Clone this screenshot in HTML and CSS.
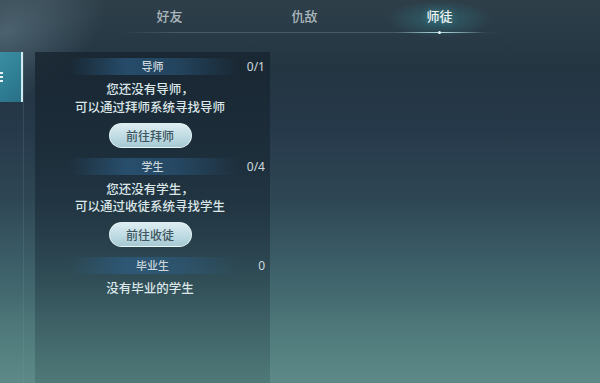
FILE: index.html
```html
<!DOCTYPE html>
<html lang="zh-CN">
<head>
<meta charset="utf-8">
<title>师徒</title>
<link rel="stylesheet" href="styles.css">
</head>
<body>
<div class="screen">
  <div class="beam"></div>
  <div class="fog"></div>
  <nav class="tabs">
    <div class="tab">好友</div>
    <div class="tab">仇敌</div>
    <div class="tab active">师徒</div>
  </nav>
  <div class="tabline"><div class="tabline-hl"><span class="dot"></span></div></div>
  <div class="main">
    <div class="side">
      <div class="side-tab">
        <span class="bars"><i></i><i></i><i></i></span>
      </div>
    </div>
    <section class="panel">
      <div class="head"><span></span><span class="title">导师</span><span class="count">0/1</span></div>
      <p class="msg">您还没有导师，<br>可以通过拜师系统寻找导师</p>
      <button class="btn">前往拜师</button>

      <div class="head gap"><span></span><span class="title">学生</span><span class="count">0/4</span></div>
      <p class="msg">您还没有学生，<br>可以通过收徒系统寻找学生</p>
      <button class="btn">前往收徒</button>

      <div class="head gap"><span></span><span class="title">毕业生</span><span class="count">0</span></div>
      <p class="msg">没有毕业的学生</p>
    </section>
  </div>
</div>
</body>
</html>
```
FILE: styles.css
```css
* { box-sizing: border-box; }
html, body { margin: 0; padding: 0; }
body {
  width: 600px;
  height: 383px;
  overflow: hidden;
  font-family: "Noto Sans CJK SC", "Noto Sans", sans-serif;
}
.screen {
  position: relative;
  width: 600px;
  height: 383px;
  overflow: hidden;
  background: linear-gradient(180deg, #2e3f49 0px, #293b47 30px, #243542 70px, #26394a 130px, #2f4755 200px, #3b5d67 260px, #4a7376 320px, #598583 383px);
}
.beam {
  position: absolute;
  left: -40px;
  top: -30px;
  width: 160px;
  height: 120px;
  background: radial-gradient(ellipse at 30% 40%, rgba(140,170,185,0.35), rgba(140,170,185,0) 65%);
  transform: rotate(-25deg);
  pointer-events: none;
}
.fog {
  position: absolute;
  left: 0;
  right: 0;
  bottom: 0;
  height: 90px;
  background: linear-gradient(180deg, rgba(110,160,155,0) 0, rgba(110,160,155,0.18) 100%);
  pointer-events: none;
}
.tabs {
  position: relative;
  z-index: 0;
  display: flex;
  padding-left: 102px;
  height: 32px;
  align-items: center;
}
.tab {
  position: relative;
  width: 135px;
  text-align: center;
  font-size: 13px;
  font-weight: 500;
  color: #aab6bb;
  line-height: 16px;
}
.tab.active {
  color: #eef4f5;
  text-shadow: 0 0 8px rgba(80,200,210,0.5);
}
.tab.active::before {
  content: "";
  position: absolute;
  left: 15px;
  right: 15px;
  top: -12px;
  bottom: -14px;
  background: radial-gradient(ellipse closest-side at 50% 55%, rgba(55,140,150,0.45), rgba(55,140,150,0) 100%);
  z-index: -1;
}
.tabline {
  position: relative;
  margin-left: 120px;
  width: 380px;
  height: 1px;
  background: linear-gradient(90deg, rgba(120,150,160,0) 0, rgba(120,150,160,0.35) 15%, rgba(120,150,160,0.35) 85%, rgba(120,150,160,0) 100%);
}
.tabline-hl {
  position: absolute;
  left: 275px;
  top: 0;
  width: 90px;
  height: 1px;
  background: linear-gradient(90deg, rgba(190,235,240,0) 0, rgba(190,235,240,0.9) 50%, rgba(190,235,240,0) 100%);
}
.dot {
  position: absolute;
  left: 43px;
  top: -1px;
  width: 3px;
  height: 3px;
  border-radius: 50%;
  background: #e8f6f8;
}
.main {
  position: relative;
  display: flex;
  gap: 11px;
  margin-top: 19px;
  height: 331px;
}
.side {
  width: 24px;
  flex: none;
  border-right: 1px solid rgba(120,160,170,0.18);
}
.side-tab {
  position: relative;
  height: 50px;
  background: linear-gradient(135deg, #3a8da2 0%, #2e7d93 60%, #2a6f86 100%);
  border-right: 2px solid #cfeaf0;
  display: flex;
  align-items: center;
}
.bars {
  display: flex;
  flex-direction: column;
  gap: 2px;
  margin-left: -1px;
}
.bars i {
  display: block;
  width: 4px;
  height: 2px;
  background: #e6f3f6;
}
.panel {
  width: 235px;
  flex: none;
  padding: 6px 5px 0 0;
  background: linear-gradient(180deg, rgba(22,36,47,0.8) 0, rgba(24,40,52,0.6) 150px, rgba(30,52,62,0.35) 260px, rgba(40,70,76,0.25) 331px);
  display: flex;
  flex-direction: column;
  align-items: center;
}
.head {
  width: 100%;
  height: 17px;
  display: grid;
  grid-template-columns: 1fr auto 1fr;
  align-items: center;
  padding-left: 5px;
  background: linear-gradient(90deg, rgba(40,80,110,0) 15%, rgba(45,95,135,0.65) 40%, rgba(45,95,135,0.5) 62%, rgba(40,80,110,0) 88%);
}
.head.gap { margin-top: 10px; }
.title {
  font-size: 11px;
  font-weight: 500;
  color: #cbd7dc;
  line-height: 17px;
}
.count {
  justify-self: end;
  font-family: "Noto Sans", "Liberation Sans", sans-serif;
  font-size: 12px;
  color: #d0dade;
  line-height: 17px;
}
.msg {
  margin: 5px 0 0;
  text-align: center;
  font-size: 12.5px;
  font-weight: 500;
  line-height: 17.5px;
  color: #dbe6e8;
}
.btn {
  margin-top: 7.5px;
  width: 83px;
  height: 25px;
  border-radius: 13px;
  border: 1px solid rgba(235,248,250,0.8);
  background: linear-gradient(180deg, #dcedf1 0%, #bfdbe3 55%, #a6c9d3 100%);
  color: #3e5661;
  font-family: "Noto Sans CJK SC", sans-serif;
  font-size: 12px;
  font-weight: 500;
  padding: 0;
  line-height: 23px;
}
```
